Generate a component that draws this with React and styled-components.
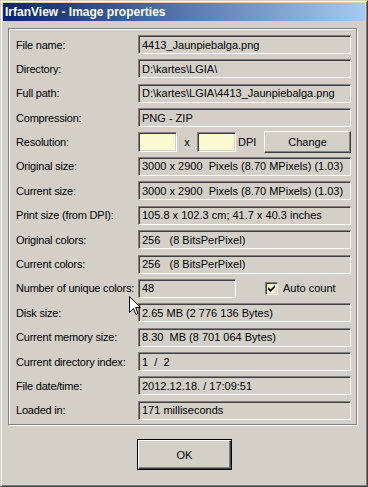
import React from 'react';
import styled, { createGlobalStyle } from 'styled-components';

const GlobalStyle = createGlobalStyle`
  html, body {
    margin: 0;
    padding: 0;
    background: #d4d0c8;
  }
  body {
    font-family: "Liberation Sans", Arial, sans-serif;
    font-size: 11px;
    color: #000;
  }
`

const Window = styled.div`
  position: relative;
  box-sizing: border-box;
  width: 368px;
  height: 487px;
  background: #d4d0c8;
  border-top: 1px solid #d4d0c8;
  border-left: 1px solid #d4d0c8;
  border-right: 1px solid #404040;
  border-bottom: 1px solid #404040;
  box-shadow: inset 1px 1px 0 #fff, inset -1px -1px 0 #808080;
  padding: 2px;
  display: flex;
  flex-direction: column;
`

const TitleBar = styled.div`
  height: 18px;
  display: flex;
  align-items: center;
  padding-left: 2px;
  background: linear-gradient(to right, #0a246a, #a6caf0);
  color: #fff;
  font-weight: bold;
  font-size: 12px;
  font-family: "Liberation Sans", Arial, sans-serif;
`

const Group = styled.div`
  box-sizing: border-box;
  margin: 7px 0 0 5px;
  width: 349px;
  height: 397px;
  border: 1px solid #808080;
  box-shadow: inset 1px 1px 0 #fff, 1px 1px 0 #fff;
  padding: 6px 0 0 7px;
  display: flex;
  flex-direction: column;
  gap: 5.4px;
`

const Row = styled.div`
  height: 19px;
  display: flex;
  align-items: center;
`

const Label = styled.div`
  width: 122px;
  flex: none;
  white-space: nowrap;
  letter-spacing: -0.2px;
`

const Sunken = styled.div`
  box-sizing: border-box;
  border-top: 1px solid #808080;
  border-left: 1px solid #808080;
  border-right: 1px solid #fff;
  border-bottom: 1px solid #fff;
  box-shadow: inset 1px 1px 0 #404040, inset -1px -1px 0 #d4d0c8;
`

const Value = styled(Sunken)`
  width: ${p => p.$w || 213}px;
  height: 19px;
  padding: 0 0 0 3px;
  display: flex;
  align-items: center;
  white-space: pre;
  overflow: hidden;
`

const Input = styled(Sunken)`
  width: 39px;
  height: 20px;
  background: #fafad2;
`

const Times = styled.span`
  width: 20px;
  text-align: center;
`

const Unit = styled.span`
  margin-left: 2px;
`

const Button = styled.button`
  box-sizing: border-box;
  font-family: inherit;
  font-size: 11px;
  color: #000;
  background: #d4d0c8;
  padding: 0;
  margin: ${p => p.$push ? '0 0 0 auto' : '0'};
  width: ${p => p.$w}px;
  height: ${p => p.$h}px;
  border: 1px solid ${p => p.$default ? '#000' : '#fff'};
  ${p => p.$default
    ? 'box-shadow: inset 1px 1px 0 #fff, inset -1px -1px 0 #404040, inset -2px -2px 0 #808080;'
    : 'border-right-color: #404040; border-bottom-color: #404040; box-shadow: inset -1px -1px 0 #808080;'}
`

const ValueCol = styled.div`
  width: 213px;
  display: flex;
  align-items: center;
`

const CheckLabel = styled.label`
  display: flex;
  align-items: center;
  gap: 5px;
  margin-left: 29px;
`

const CheckBox = styled(Sunken)`
  width: 13px;
  height: 13px;
  background: #fafad2;
  display: flex;
  align-items: center;
  justify-content: center;
`

const Footer = styled.div`
  flex: 1;
  display: flex;
  justify-content: center;
  padding-top: 14px;
  padding-left: 1px;
`

const Cursor = styled.svg`
  position: absolute;
  left: 128px;
  top: 295px;
`

const rows = [
  ['File name:', '4413_Jaunpiebalga.png'],
  ['Directory:', 'D:\\kartes\\LGIA\\'],
  ['Full path:', 'D:\\kartes\\LGIA\\4413_Jaunpiebalga.png'],
  ['Compression:', 'PNG - ZIP'],
  ['Resolution:', null, 'resolution'],
  ['Original size:', '3000 x 2900  Pixels (8.70 MPixels) (1.03)'],
  ['Current size:', '3000 x 2900  Pixels (8.70 MPixels) (1.03)'],
  ['Print size (from DPI):', '105.8 x 102.3 cm; 41.7 x 40.3 inches'],
  ['Original colors:', '256   (8 BitsPerPixel)'],
  ['Current colors:', '256   (8 BitsPerPixel)'],
  ['Number of unique colors:', '48', 'unique'],
  ['Disk size:', '2.65 MB (2 776 136 Bytes)'],
  ['Current memory size:', '8.30  MB (8 701 064 Bytes)'],
  ['Current directory index:', '1  /  2'],
  ['File date/time:', '2012.12.18. / 17:09:51'],
  ['Loaded in:', '171 milliseconds'],
]

const App = () => {
  return (
    <>
      <GlobalStyle />
      <Window>
        <TitleBar>IrfanView - Image properties</TitleBar>
        <Group>
          {rows.map(([label, value, kind]) => (
            <Row key={label}>
              <Label>{label}</Label>
              {kind === 'resolution' ? (
                <ValueCol>
                  <Input />
                  <Times>x</Times>
                  <Input />
                  <Unit>DPI</Unit>
                  <Button $w={87} $h={22} $push>Change</Button>
                </ValueCol>
              ) : kind === 'unique' ? (
                <ValueCol>
                  <Value $w={98}>{value}</Value>
                  <CheckLabel>
                    <CheckBox>
                      <svg width="8" height="8" viewBox="0 0 8 8">
                        <path d="M0 3 L2.5 5.5 L7 1 L7 3.5 L2.5 8 L0 5.5 Z" fill="#000" />
                      </svg>
                    </CheckBox>
                    Auto count
                  </CheckLabel>
                </ValueCol>
              ) : (
                <Value>{value}</Value>
              )}
            </Row>
          ))}
        </Group>
        <Footer>
          <div>
            <Button $w={95} $h={31} $default>OK</Button>
          </div>
        </Footer>
        <Cursor width="13" height="20" viewBox="0 0 13 20">
          <polygon points="0.5,0.5 0.5,16.5 4.5,12.5 7,18.5 9,17.5 6.7,11.5 11.5,11.5" fill="#fff" stroke="#000" strokeWidth="1" />
        </Cursor>
      </Window>
    </>
  );
}

export default App;
